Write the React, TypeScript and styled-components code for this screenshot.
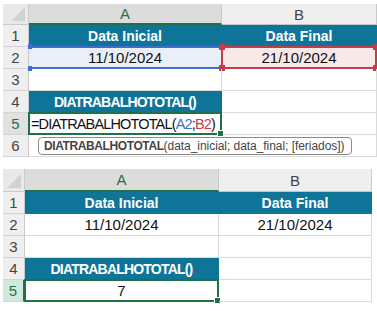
import styled, { createGlobalStyle, css } from "styled-components";

const GlobalStyle = createGlobalStyle`
  html, body {
    margin: 0;
    padding: 0;
    background: #ffffff;
  }
  body {
    font-family: "Liberation Sans", Arial, sans-serif;
  }
`;

const TEAL = "#0f7598";
const GREEN = "#1f7246";
const BLUE = "#3c6fce";
const RED = "#c53c48";
const GRID = "#dadada";

const Page = styled.div`
  width: 377px;
  height: 311px;
  display: flex;
  flex-direction: column;
  gap: 12px;
  padding: 4px 0 0 3px;
  box-sizing: border-box;
  overflow: hidden;
`;

const Sheet = styled.div<{ $rowHead: number; $colA: number; $colB: number; $head: number; $rows: number }>`
  position: relative;
  display: grid;
  grid-template-columns: ${(p) => p.$rowHead}px ${(p) => p.$colA}px ${(p) => p.$colB}px;
  grid-template-rows: ${(p) => p.$head}px repeat(${(p) => p.$rows}, 22px);
`;

const Corner = styled.div`
  background: #e9e9e9;
  border-right: 1px solid #c9c9c9;
  border-bottom: 1px solid #c9c9c9;
  box-sizing: border-box;
  display: flex;
  align-items: flex-end;
  justify-content: flex-end;
  padding: 0 3px 3px 0;
`;

const ColHead = styled.div<{ $active?: boolean }>`
  background: ${(p) => (p.$active ? "#dcdcdc" : "#efefef")};
  color: ${(p) => (p.$active ? GREEN : "#444")};
  border-right: 1px solid #c9c9c9;
  border-bottom: ${(p) => (p.$active ? `2px solid ${GREEN}` : "1px solid #c4c4c4")};
  box-sizing: border-box;
  display: flex;
  align-items: center;
  justify-content: center;
  font-size: 15px;
`;

const RowHead = styled.div<{ $active?: boolean; $selected?: boolean }>`
  background: ${(p) => (p.$selected ? "#cfeadb" : p.$active ? "#e1e1e1" : "#efefef")};
  color: ${(p) => (p.$active || p.$selected ? GREEN : "#444")};
  border-right: ${(p) => (p.$selected ? `2px solid ${GREEN}` : "1px solid #c9c9c9")};
  border-bottom: 1px solid #d4d4d4;
  box-sizing: border-box;
  display: flex;
  align-items: center;
  justify-content: center;
  font-size: 15px;
`;

type Tone = "plain" | "teal" | "blueRef" | "redRef" | "edit" | "active";

const Cell = styled.div<{ $tone?: Tone; $align?: "left" | "center" }>`
  position: relative;
  box-sizing: border-box;
  border-right: 1px solid ${GRID};
  border-bottom: 1px solid ${GRID};
  display: flex;
  align-items: center;
  justify-content: ${(p) => (p.$align === "left" ? "flex-start" : "center")};
  font-size: 15px;
  color: #111;
  white-space: nowrap;

  ${(p) =>
    p.$tone === "teal" &&
    css`
      background: ${TEAL};
      border-color: ${TEAL};
      color: #ffffff;
      font-weight: 700;
      font-size: 14px;
    `}

  ${(p) =>
    p.$tone === "blueRef" &&
    css`
      background: #e9eef8;
      border-top: 2px solid ${BLUE};
      border-bottom: 2px solid ${BLUE};
      margin-top: -1px;
      &::before,
      &::after {
        content: "";
        position: absolute;
        left: -1px;
        width: 4px;
        height: 5px;
        background: ${BLUE};
      }
      &::before {
        top: -4px;
      }
      &::after {
        bottom: -4px;
      }
    `}

  ${(p) =>
    p.$tone === "redRef" &&
    css`
      background: #f9e8e8;
      border: 2px solid ${RED};
      margin-top: -1px;
      margin-left: -1px;
      &::before,
      &::after {
        content: "";
        position: absolute;
        left: -4px;
        width: 6px;
        height: 6px;
        background: ${RED};
        box-shadow: 154px 0 0 ${RED};
      }
      &::before {
        top: -4px;
      }
      &::after {
        bottom: -4px;
      }
    `}

  ${(p) =>
    (p.$tone === "edit" || p.$tone === "active") &&
    css`
      border: 2px solid ${GREEN};
      margin: -1px 0 0 -1px;
      &::after {
        content: "";
        position: absolute;
        right: -4px;
        bottom: -4px;
        width: 5px;
        height: 5px;
        background: ${GREEN};
        border: 1px solid #fff;
      }
    `}

  ${(p) =>
    p.$tone === "edit" &&
    css`
      overflow: visible;
      font-size: 14.5px;
      letter-spacing: -0.85px;
      padding-left: 1px;
      z-index: 2;
    `}
`;

const Caps = styled.span`
  letter-spacing: -0.8px;
`;

const RefA = styled.span`
  color: ${BLUE};
`;

const RefB = styled.span`
  color: ${RED};
`;

const Hint = styled.div`
  position: absolute;
  left: 35px;
  top: 133px;
  width: 314px;
  height: 18px;
  box-sizing: border-box;
  border: 1px solid #8a8a8a;
  border-radius: 4px;
  background: #ffffff;
  display: flex;
  align-items: center;
  padding-left: 5px;
  font-size: 12px;
  letter-spacing: -0.05px;
  color: #444;
  white-space: nowrap;
  z-index: 3;
`;

const HintName = styled.b`
  font-weight: 700;
  letter-spacing: -0.4px;
`;

const CornerMark = () => (
  <svg width="14" height="14" viewBox="0 0 14 14">
    <polygon points="14,0 14,14 0,14" fill="#d2d2d2" />
  </svg>
);

const Header = ({ active }: { active: string }) => (
  <>
    <Corner>
      <CornerMark />
    </Corner>
    <ColHead $active={active === "A"}>A</ColHead>
    <ColHead $active={active === "B"}>B</ColHead>
  </>
);

const EditingSheet = () => (
  <Sheet $rowHead={26} $colA={193} $colB={155} $head={21} $rows={6}>
    <Header active="A" />

    <RowHead>1</RowHead>
    <Cell $tone="teal">Data Inicial</Cell>
    <Cell $tone="teal">Data Final</Cell>

    <RowHead>2</RowHead>
    <Cell $tone="blueRef">11/10/2024</Cell>
    <Cell $tone="redRef">21/10/2024</Cell>

    <RowHead>3</RowHead>
    <Cell />
    <Cell />

    <RowHead>4</RowHead>
    <Cell $tone="teal">
      <Caps>DIATRABALHOTOTAL()</Caps>
    </Cell>
    <Cell />

    <RowHead $active>5</RowHead>
    <Cell $tone="edit" $align="left">
      =DIATRABALHOTOTAL(<RefA>A2</RefA>;<RefB>B2</RefB>)
    </Cell>
    <Cell />

    <RowHead>6</RowHead>
    <Cell />
    <Cell />

    <Hint>
      <HintName>DIATRABALHOTOTAL</HintName>(data_inicial; data_final; [feriados])
    </Hint>
  </Sheet>
);

const ResultSheet = () => (
  <Sheet $rowHead={22} $colA={194} $colB={153} $head={23} $rows={5}>
    <Header active="A" />

    <RowHead>1</RowHead>
    <Cell $tone="teal">Data Inicial</Cell>
    <Cell $tone="teal">Data Final</Cell>

    <RowHead>2</RowHead>
    <Cell>11/10/2024</Cell>
    <Cell>21/10/2024</Cell>

    <RowHead>3</RowHead>
    <Cell />
    <Cell />

    <RowHead>4</RowHead>
    <Cell $tone="teal">
      <Caps>DIATRABALHOTOTAL()</Caps>
    </Cell>
    <Cell />

    <RowHead $selected>5</RowHead>
    <Cell $tone="active">7</Cell>
    <Cell />
  </Sheet>
);

export default function App() {
  return (
    <>
      <GlobalStyle />
      <Page>
        <EditingSheet />
        <ResultSheet />
      </Page>
    </>
  );
}
